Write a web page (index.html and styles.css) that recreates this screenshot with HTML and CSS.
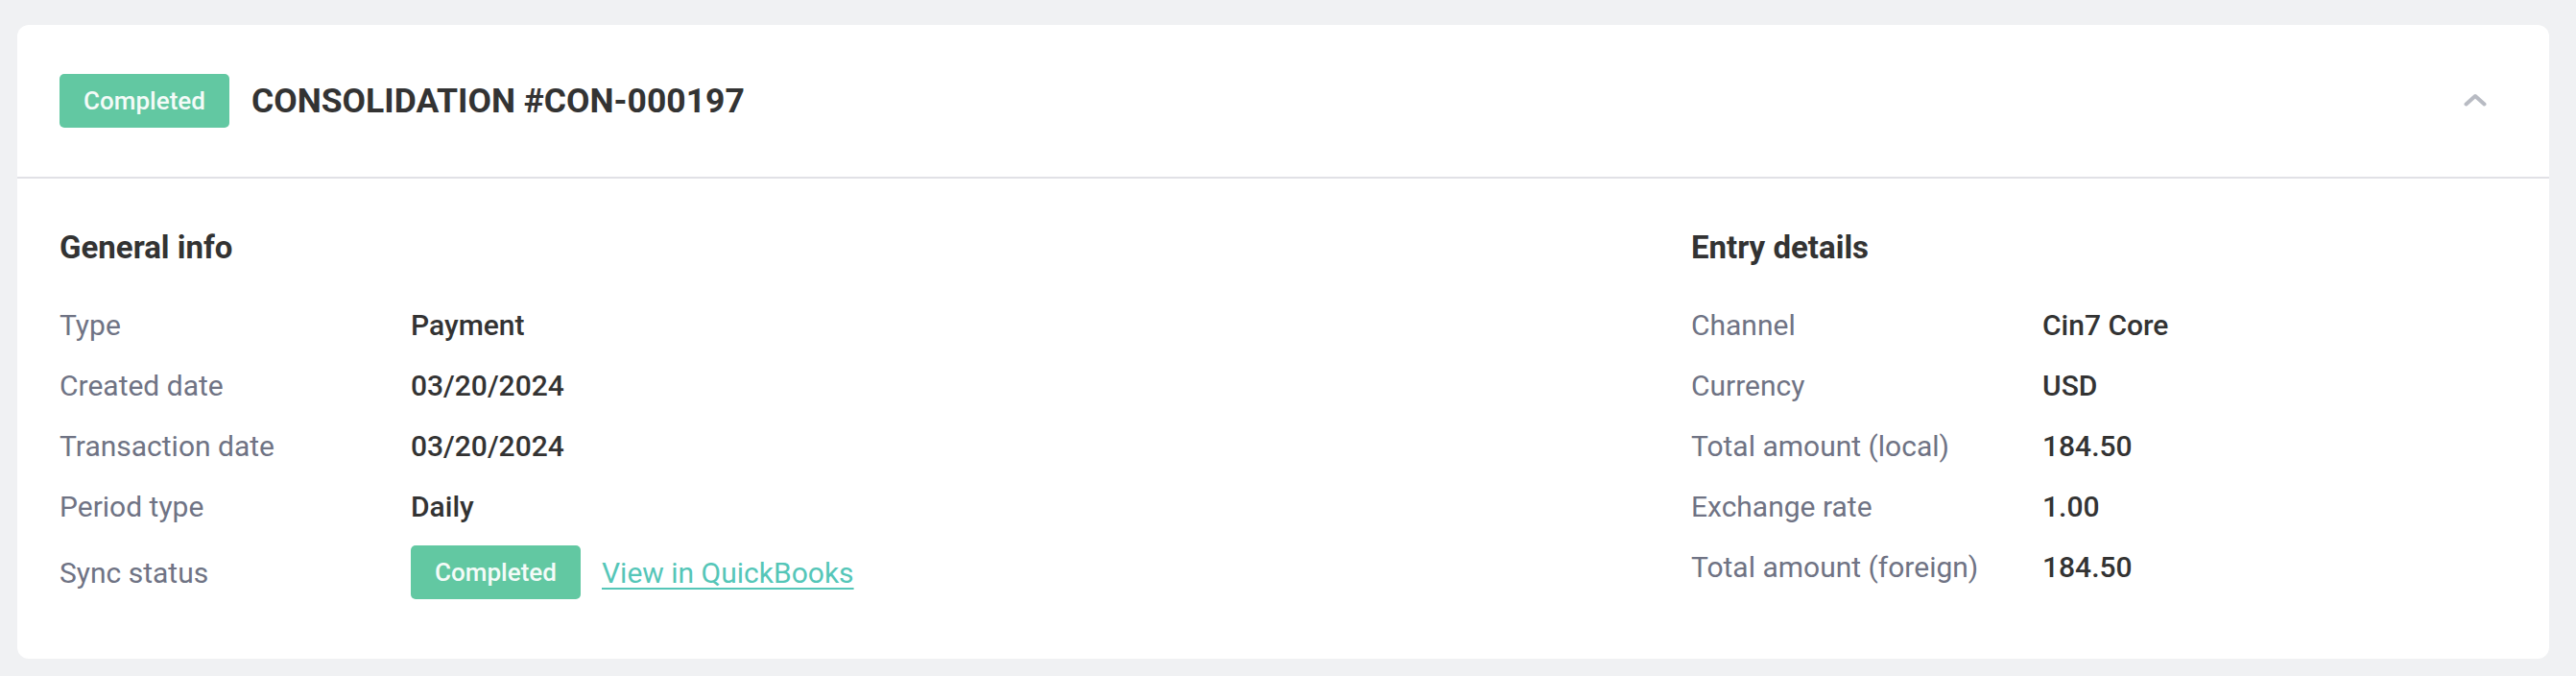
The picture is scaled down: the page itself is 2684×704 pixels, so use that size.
FILE: index.html
```html
<!DOCTYPE html>
<html lang="en">
<head>
<meta charset="utf-8">
<title>Consolidation CON-000197</title>
<link rel="stylesheet" href="styles.css">
</head>
<body>
<main class="page">
  <section class="card">
    <header class="card-header">
      <div class="title-group">
        <span class="badge">Completed</span>
        <h1 class="title">CONSOLIDATION #CON-000197</h1>
      </div>
      <button class="collapse-btn" type="button" aria-label="Collapse">
        <svg width="24" height="14" viewBox="0 0 24 14" fill="none">
          <path d="M2.5 11.5 L12 3 L21.5 11.5" stroke="#b8bbc3" stroke-width="4" stroke-linecap="round" stroke-linejoin="round"/>
        </svg>
      </button>
    </header>
    <div class="card-body">
      <div class="info-block">
        <h2 class="block-title">General info</h2>
        <dl class="info-list">
          <div class="info-row"><dt class="label">Type</dt><dd class="value">Payment</dd></div>
          <div class="info-row"><dt class="label">Created date</dt><dd class="value">03/20/2024</dd></div>
          <div class="info-row"><dt class="label">Transaction date</dt><dd class="value">03/20/2024</dd></div>
          <div class="info-row"><dt class="label">Period type</dt><dd class="value">Daily</dd></div>
          <div class="info-row"><dt class="label">Sync status</dt><dd class="value value-status"><span class="badge">Completed</span><a class="link" href="#">View in QuickBooks</a></dd></div>
        </dl>
      </div>
      <div class="info-block">
        <h2 class="block-title">Entry details</h2>
        <dl class="info-list">
          <div class="info-row"><dt class="label">Channel</dt><dd class="value">Cin7 Core</dd></div>
          <div class="info-row"><dt class="label">Currency</dt><dd class="value">USD</dd></div>
          <div class="info-row"><dt class="label">Total amount (local)</dt><dd class="value">184.50</dd></div>
          <div class="info-row"><dt class="label">Exchange rate</dt><dd class="value">1.00</dd></div>
          <div class="info-row"><dt class="label">Total amount (foreign)</dt><dd class="value">184.50</dd></div>
        </dl>
      </div>
    </div>
  </section>
</main>
</body>
</html>
```
FILE: styles.css
```css
* { box-sizing: border-box; }

html, body {
  margin: 0;
  padding: 0;
  background: #f0f1f3;
  font-family: Roboto, "Noto Sans", "Liberation Sans", sans-serif;
  color: #333333;
}

.page {
  padding: 26px 28px 18px 18px;
}

.card {
  background: #ffffff;
  border-radius: 12px;
  overflow: hidden;
}

.card-header {
  height: 160px;
  display: flex;
  align-items: center;
  justify-content: space-between;
  padding: 0 44px;
  border-bottom: 2px solid #e1e1e6;
}

.title-group {
  display: flex;
  align-items: center;
  gap: 23px;
}

.badge {
  display: inline-flex;
  align-items: center;
  justify-content: center;
  height: 56px;
  width: 177px;
  border-radius: 5px;
  background: #62c8a2;
  color: #f4fbf8;
  font-size: 26px;
  font-weight: 500;
}

.title {
  margin: 0;
  font-size: 35.5px;
  font-weight: 700;
  color: #333333;
}

.collapse-btn {
  width: 66px;
  height: 56px;
  border: 0;
  background: transparent;
  padding: 0;
  display: flex;
  align-items: center;
  justify-content: center;
  margin-top: -2px;
}

.card-body {
  display: grid;
  grid-template-columns: 2fr 1fr;
  padding: 52px 44px 62px;
}

.block-title {
  margin: 0 0 38px;
  font-size: 33px;
  line-height: 40px;
  font-weight: 700;
  color: #333333;
}

.info-list {
  margin: 0;
  display: flex;
  flex-direction: column;
  gap: 19px;
}

.info-row {
  display: grid;
  grid-template-columns: 366px 1fr;
  align-items: center;
  min-height: 44px;
}

.label {
  font-size: 30px;
  color: #6f7384;
}

.value {
  margin: 0;
  font-size: 30px;
  font-weight: 500;
  color: #333333;
}

.value-status {
  display: flex;
  align-items: center;
  gap: 22px;
}

.link {
  font-size: 30px;
  font-weight: 400;
  color: #55c6b8;
  text-decoration: underline;
  text-decoration-thickness: 2px;
  text-underline-offset: 5px;
}
```
